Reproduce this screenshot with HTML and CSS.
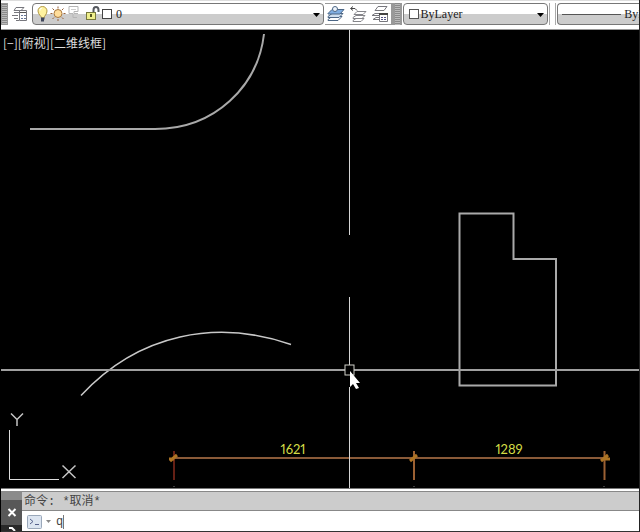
FILE: index.html
```html
<!DOCTYPE html>
<html lang="zh-CN">
<head>
<meta charset="utf-8">
<title>CAD</title>
<link rel="stylesheet" href="styles.css">
</head>
<body>
<div class="app">
  <header class="toolbar">
    <span class="grip"></span>
    <button class="tool" type="button" aria-label="图层特性">
      <svg width="18" height="18" viewBox="0 0 18 18" fill="none" stroke="#77777d">
        <path d="M5 2.500h8l-3 3H3zM3 7.500h5M1 10.500h6M3 13.500h4M5 15.500h3"/>
        <path d="M8.500 5.500h7v10h-7z" fill="#fff"/><path d="M9 7.500h6" stroke="#555"/><path d="M10 10.500h2M13 10.500h2M10 13.500h2M13 13.500h2" stroke="#667799"/>
      </svg>
    </button>
    <div class="combo combo-layer">
      <svg class="combo-icons" width="80" height="20" viewBox="0 0 80 20" fill="none">
        <path d="M7.500 14c0-2-3.500-3.500-3.500-7a4.500 4.500 0 0 1 9 0c0 3.500-3 5-3 7z" fill="#fff3a0" stroke="#b39a45"/>
        <path d="M7 14.500h3.500M7 16.500h3" stroke="#3f465b" stroke-width="2"/>
        <path d="M6 6.500V5l2-1" stroke="#fff"/>
        <circle cx="24" cy="9.500" r="4" fill="#ffdd9a" stroke="#a87840"/>
        <path d="M24 2.500v2M24 15v2M16.500 9.500h2M29.500 9.500h2M18.500 4.500l1.500 1.500M28 13.500l1.500 1.500M29.500 4.500L28 6M20 13.500L18.500 15" stroke="#965f38"/>
        <path d="M35 2.500h9v5h-4v2h4M35 2.500v7h4v4h4" stroke="#b5b5b5"/>
        <path d="M37 5.500h5" stroke="#ccc"/>
        <path d="M59.500 9V6q0-3 2.500-3t2.500 3v2" stroke="#55585e" stroke-width="2"/>
        <rect x="52.500" y="8.500" width="9" height="7" fill="#efef8c" stroke="#77783b"/><path d="M57 10v3" stroke="#55551f" stroke-width="2"/>
        <rect x="68.500" y="5.500" width="9" height="9" fill="#fff" stroke="#444"/>
      </svg>
      <select aria-label="图层"><option>0</option></select>
      <svg class="arrow" width="7" height="4" viewBox="0 0 7 4"><path d="M0 0h7L3.500 4z"/></svg>
    </div>
    <div class="tools">
      <button class="tool" type="button" aria-label="置为当前图层">
        <svg width="18" height="18" viewBox="0 0 18 18" stroke="#4c6685">
          <path d="M1 14.500l4-3h10l-4 4H1z" fill="#fff"/><path d="M1 11.500l4-3h11l-4 4H1z" fill="#cfdfef"/><path d="M1 8.500l4-4h12l-4 4.500H1z" fill="#80aee2"/><circle cx="8" cy="4" r="2.500" fill="#eef4fb"/>
        </svg>
      </button>
      <button class="tool" type="button" aria-label="上一个图层">
        <svg width="18" height="18" viewBox="0 0 18 18" fill="#fff" stroke="#85858a">
          <path d="M4 15.500l3-2h8l-3 3H4zM4 12.500l3-2h9l-3 3H4zM5 9.500l3-3h9l-3 3z"/><path d="M8 5.500Q7 2.500 2 3.500M4 1.500l-2.500 2 2.500 2" fill="none" stroke="#444"/>
        </svg>
      </button>
      <button class="tool" type="button" aria-label="图层状态">
        <svg width="18" height="18" viewBox="0 0 18 18" fill="#fff" stroke="#77777d">
          <path d="M2 14.500l3-2h7l-2 2zM1 10.500l3-2h9l-3 2zM4 5.500l3-4h9l-3 4z"/><path d="M8.500 8.500h8v8h-8z"/><path d="M8 9h9" stroke="#444" stroke-width="2"/><path d="M10 12.500h2M13 12.500h2M10 14.500h2M13 14.500h2" stroke="#558"/>
        </svg>
      </button>
    </div>
    <span class="grip grip-wide"></span>
    <div class="combo combo-color">
      <svg class="combo-icons" width="16" height="20" viewBox="0 0 16 20"><rect x="4.500" y="5.500" width="9" height="9" fill="#fff" stroke="#555"/></svg>
      <select aria-label="颜色"><option>ByLayer</option></select>
      <svg class="arrow" width="7" height="4" viewBox="0 0 7 4"><path d="M0 0h7L3.500 4z"/></svg>
    </div>
    <span class="divider"></span>
    <div class="combo combo-line">
      <svg class="combo-icons" width="64" height="20" viewBox="0 0 64 20"><path d="M3 10.500h59" stroke="#555"/></svg>
      <select aria-label="线型"><option>ByLayer</option></select>
    </div>
  </header>

  <main class="viewport">
    <p class="view-label">[−][俯视][二维线框]</p>
    <svg class="drawing" viewBox="0 30 640 458" fill="none" stroke="#a9a9a9">
      <path d="M30 129H155C215 129 258 86 264 34" stroke-width="2"/>
      <path d="M81 395.500C139 333 217 319 291 344.500" stroke="#c8c8c8" stroke-width="1.500"/>
      <path d="M459.500 213.500H513.500V259H556V385.500H459.500z" stroke-width="2"/>
      <g stroke="#a66a3c">
        <path d="M173 458H607" stroke="#8a5a38" stroke-width="2"/>
        <path d="M174 451v29" stroke="#652015" stroke-width="2"/>
        <path d="M414 451v29M604.500 451v29" stroke="#9c6133" stroke-width="2"/>
        <path d="M169 459h5M170 461l7-6M410 461l7-6M601 461l7-6M605 459h5" stroke="#ad7424" stroke-width="3"/>
        <path d="M174 486v1M414 486v1M604 486v1" stroke="#777"/>
      </g>
      <g class="dimension">
        <text x="293" y="454">1621</text>
        <text x="509" y="454">1289</text>
      </g>
      <path d="M0 370H640" stroke="#a0a0a0" stroke-width="2"/>
      <path d="M349.500 30V235M349.500 297V365M349.500 387V488" stroke="#d5d5d5"/>
      <rect x="345" y="365" width="9" height="10" fill="#000" stroke="#d0d0c8"/>
      <path d="M350 371v16l3-3 3 5 3-1-3-5h4z" fill="#fff" stroke="none"/>
      <path d="M9.500 430V479.500H59" stroke="#ddd"/>
      <path d="M11 413.500L17 419.500L23 413.500M17 419.500V426M62.500 465.500L75.500 478M75.500 465.500L62.500 478" stroke="#c4c4c4" stroke-width="1.500"/>
    </svg>
  </main>

  <footer class="command">
    <div class="command-side">
      <span class="handle"></span>
      <button class="close" type="button" aria-label="关闭"><svg width="10" height="9" viewBox="0 0 10 9"><path d="M1.500 1L8.500 8M8.500 1L1.500 8" stroke="#fff" stroke-width="2"/></svg></button>
      <button class="options" type="button" aria-label="自定义"><svg width="10" height="4" viewBox="0 0 10 4"><path d="M2 1h3l3 3" stroke="#fff" stroke-width="2" fill="none"/></svg></button>
    </div>
    <div class="command-main">
      <p class="history">命令: *取消*</p>
      <div class="entry">
        <svg width="15" height="14" viewBox="0 0 15 14" fill="none"><rect x=".5" y=".5" width="14" height="13" rx="1" fill="#dce5f1" stroke="#9aa8ba"/><path d="M3 4l3 2.500L3 9M8 9.500h4" stroke="#57628c"/></svg>
        <svg class="recent" width="5" height="3" viewBox="0 0 5 3"><path d="M0 0h5L2.500 3z" fill="#888"/></svg>
        <span class="typed"><input type="text" size="1" value="q" aria-label="命令"></span>
      </div>
    </div>
  </footer>
</div>
</body>
</html>
```
FILE: styles.css
```css
* { box-sizing: border-box; }
body { margin: 0; background: #000; }
p { margin: 0; }
button { border: 0; padding: 0; background: none; display: flex; align-items: center; justify-content: center; }
svg { display: block; }

.app {
  display: flex;
  flex-direction: column;
  min-height: 100vh;
  border-left: 1px solid #000;
  border-right: 1px solid #222;
}

.toolbar {
  display: flex;
  height: 30px;
  padding: 2px 0 4px;
  background: #fff;
  border-top: 1px solid #ddd;
  border-bottom: 1px solid #999;
  overflow: hidden;
}
.grip {
  flex: none;
  width: 7px;
  border: 1px solid #999;
  background: repeating-linear-gradient(#8a8a8a 0 1px, #bbb 1px 2px);
}
.grip-wide { width: 10px; margin-right: 1px; border-width: 0 2px 0 3px; }
.divider { flex: none; width: 7px; margin: 0 1px; border: solid #aaa; border-width: 0 1px; }
.tool { flex: none; width: 22px; }
.tools { display: flex; flex: none; border: solid #999; border-width: 1px 1px 1px 0; }
.grip + .tool { width: 24px; }

.combo {
  position: relative;
  min-width: 0;
  border: 1px solid #777;
  border-radius: 4px;
  background: linear-gradient(#fff 10px, #ccc 10px);
}
.combo-layer { flex: 294 1 0; margin-right: 1px; }
.combo-color { flex: 146 1 0; }
.combo-line { flex: 82 1 0; border-right: 0; border-radius: 4px 0 0 4px; overflow: hidden; }
.combo-icons { position: absolute; left: 1px; top: 0; pointer-events: none; }
.combo select {
  display: block;
  appearance: none;
  width: 100%;
  height: 100%;
  border: 0;
  background: none;
  color: #222;
  font: 12px "Liberation Serif", serif;
}
.combo-layer select { padding: 0 16px 0 83px; }
.combo-color select { padding: 0 16px 0 17px; }
.combo-line select { padding: 0 0 0 66px; text-overflow: clip; }
.arrow { position: absolute; right: 3px; top: 9px; pointer-events: none; }

.viewport { position: relative; flex: 1; background: #000; overflow: hidden; }
.view-label {
  position: absolute;
  left: 2px;
  top: 5px;
  color: #ddd;
  font: 12px/16px "Noto Sans CJK SC", sans-serif;
}
.drawing { width: calc(100% + 2px); margin-left: -1px; }
.dimension text {
  fill: #d3dc46;
  stroke: none;
  text-anchor: middle;
  font: 13px Lato, sans-serif;
  font-variant-numeric: proportional-nums;
}

.command {
  display: flex;
  height: 44px;
  border-top: 1px solid #777;
  border-bottom: 1px solid #333;
  background: #fff;
  padding-top: 2px;
}
.command-side { display: flex; flex-direction: column; flex: none; width: 21px; }
.handle { height: 9px; background: #8b8b8b; }
.close { height: 25px; background: #585858; }
.options { flex: 1; align-items: flex-end; background: #292929; }
.command-main { flex: 1; min-width: 0; }
.history {
  height: 20px;
  padding-left: 2px;
  border-top: 1px solid #888;
  border-bottom: 1px solid #888;
  background: #ccc;
  color: #444;
  font: 12px/20px "Liberation Mono", "Noto Sans CJK SC", monospace;
}
.entry { display: flex; align-items: center; height: 21px; padding-left: 5px; }
.recent { margin: 0 5px 0 4px; }
.typed { display: flex; flex: 1; }
.typed input {
  width: 8px;
  height: 14px;
  padding: 0;
  border: 0;
  border-right: 1px solid #777;
  outline: 0;
  background: none;
  color: #444;
  font: 12px "Liberation Mono", monospace;
}
```
